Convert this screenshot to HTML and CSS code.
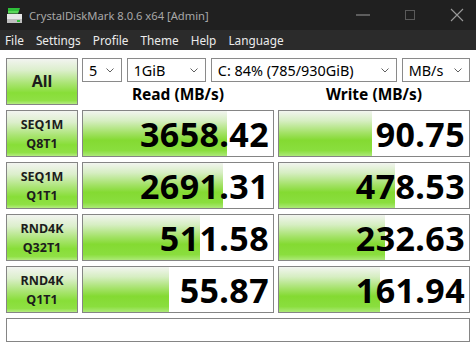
FILE: index.html
```html
<!DOCTYPE html>
<html lang="en">
<head>
    <meta charset="UTF-8">
    <title>CrystalDiskMark 8.0.6 x64 [Admin]</title>
    <link rel="stylesheet" href="styles.css">
</head>
<body>
    <div class="titlebar">
        <svg class="app-icon" width="17" height="17" viewBox="0 0 17 17">
            <path d="M2 1h12l-1 3H2z" fill="#2fbf3a"/>
            <path d="M2 4h11l-1 2.5H2z" fill="#5bd85a"/>
            <rect x="1" y="7" width="15" height="9" fill="#e6e6e6"/>
            <rect x="1" y="12" width="15" height="4" fill="#bdbdbd"/>
            <rect x="11" y="13" width="3" height="2" fill="#2fbf3a"/>
        </svg>
        <span class="title">CrystalDiskMark 8.0.6 x64 [Admin]</span>
        <div class="controls">
            <svg width="14" height="14" viewBox="0 0 14 14"><path d="M0 7h14" stroke="#9a9a9a" stroke-width="1"/></svg>
            <svg width="14" height="14" viewBox="0 0 14 14"><rect x="2.5" y="2.5" width="9" height="9" fill="none" stroke="#5a5a5a"/></svg>
            <svg width="14" height="14" viewBox="0 0 14 14"><path d="M1 1l12 12M13 1L1 13" stroke="#9a9a9a" stroke-width="1.1"/></svg>
        </div>
    </div>
    <div class="menubar">
        <span>File</span>
        <span>Settings</span>
        <span>Profile</span>
        <span>Theme</span>
        <span>Help</span>
        <span>Language</span>
    </div>

    <div class="main">
        <div class="label all">All</div>
        <div class="top">
            <div class="selects">
                <div class="select w5">5 <svg class="chev" width="8" height="5" viewBox="0 0 8 5"><path d="M0.5 0.5l3.5 3.5 3.5-3.5" fill="none" stroke="#606060"/></svg></div>
                <div class="select wsize">1GiB <svg class="chev" width="8" height="5" viewBox="0 0 8 5"><path d="M0.5 0.5l3.5 3.5 3.5-3.5" fill="none" stroke="#606060"/></svg></div>
                <div class="select wdrive">C: 84% (785/930GiB) <svg class="chev" width="8" height="5" viewBox="0 0 8 5"><path d="M0.5 0.5l3.5 3.5 3.5-3.5" fill="none" stroke="#606060"/></svg></div>
                <div class="select wunit">MB/s <svg class="chev" width="8" height="5" viewBox="0 0 8 5"><path d="M0.5 0.5l3.5 3.5 3.5-3.5" fill="none" stroke="#606060"/></svg></div>
            </div>
            <div class="heads">
                <div>Read (MB/s)</div>
                <div>Write (MB/s)</div>
            </div>
        </div>

        <div class="label">SEQ1M<br>Q8T1</div>
        <div class="cell"><div class="bar" style="width: 76%"></div><span>3658.42</span></div>
        <div class="cell"><div class="bar" style="width: 49%"></div><span>90.75</span></div>

        <div class="label">SEQ1M<br>Q1T1</div>
        <div class="cell"><div class="bar" style="width: 73.5%"></div><span>2691.31</span></div>
        <div class="cell"><div class="bar" style="width: 61%"></div><span>478.53</span></div>

        <div class="label">RND4K<br>Q32T1</div>
        <div class="cell"><div class="bar" style="width: 61.5%"></div><span>511.58</span></div>
        <div class="cell"><div class="bar" style="width: 56%"></div><span>232.63</span></div>

        <div class="label">RND4K<br>Q1T1</div>
        <div class="cell"><div class="bar" style="width: 45%"></div><span>55.87</span></div>
        <div class="cell"><div class="bar" style="width: 53%"></div><span>161.94</span></div>

        <div class="status"></div>
    </div>
</body>
</html>
```

FILE: styles.css
```css
body {
    margin: 0;
    background: #ffffff;
    font-family: "Noto Sans", "Open Sans", sans-serif;
    color: #000;
}
.titlebar {
    height: 30px;
    background: #202020;
    display: flex;
    align-items: center;
    padding-left: 6px;
}
.app-icon {
    margin-right: 6px;
}
.title {
    color: #a8a8a8;
    font-size: 11.2px;
}
.controls {
    margin-left: auto;
    display: flex;
    gap: 33px;
    padding-right: 12px;
}
.menubar {
    height: 20px;
    background: #2b2b2b;
    display: flex;
    align-items: center;
    padding-left: 5px;
    gap: 12px;
    color: #ececec;
    font-size: 11.8px;
}
.main {
    display: grid;
    grid-template-columns: 72px 192px 192px;
    grid-auto-rows: 47px;
    gap: 5px 4px;
    padding: 8px 6px 0 6px;
}
.label {
    border: 1px solid #858585;
    background: linear-gradient(to bottom, #f2f4f0 0%, #dcefcc 25%, #a8e470 55%, #88de38 75%, #8fe044 92%, #b4ec80 100%);
    display: flex;
    align-items: center;
    justify-content: center;
    text-align: center;
    font-weight: bold;
    font-size: 12.5px;
    line-height: 19px;
    color: #1c1c1c;
}
.all {
    font-size: 16px;
}
.top {
    grid-column: 2 / 4;
    display: flex;
    flex-direction: column;
}
.selects {
    display: flex;
    gap: 5px;
    height: 24px;
}
.select {
    border: 1px solid #8a8a8a;
    background: #fff;
    font-size: 14.4px;
    display: flex;
    align-items: center;
    padding-left: 6px;
    position: relative;
}
.chev {
    position: absolute;
    right: 7px;
    top: 9px;
}
.w5 { width: 32px; }
.wsize { width: 72px; }
.wdrive { width: 180px; }
.wunit { width: 61px; }
.heads {
    display: grid;
    grid-template-columns: 192px 192px;
    gap: 4px;
    font-weight: bold;
    font-size: 15.5px;
    text-align: center;
    padding-top: 1px;
}
.cell {
    border: 1px solid #858585;
    background: #fff;
    position: relative;
    display: flex;
    align-items: center;
    justify-content: flex-end;
    padding-right: 4px;
    overflow: hidden;
}
.bar {
    position: absolute;
    left: 0;
    top: 0;
    bottom: 0;
    background: linear-gradient(to bottom, #f2f5ef 0%, #d6eec2 22%, #a4e268 48%, #84da32 65%, #8ade3e 88%, #ace978 100%);
}
.cell span {
    position: relative;
    font-size: 34px;
    font-weight: bold;
    letter-spacing: 0.4px;
}
.status {
    grid-column: 1 / 4;
    height: 22px;
    border: 1px solid #858585;
}
```
